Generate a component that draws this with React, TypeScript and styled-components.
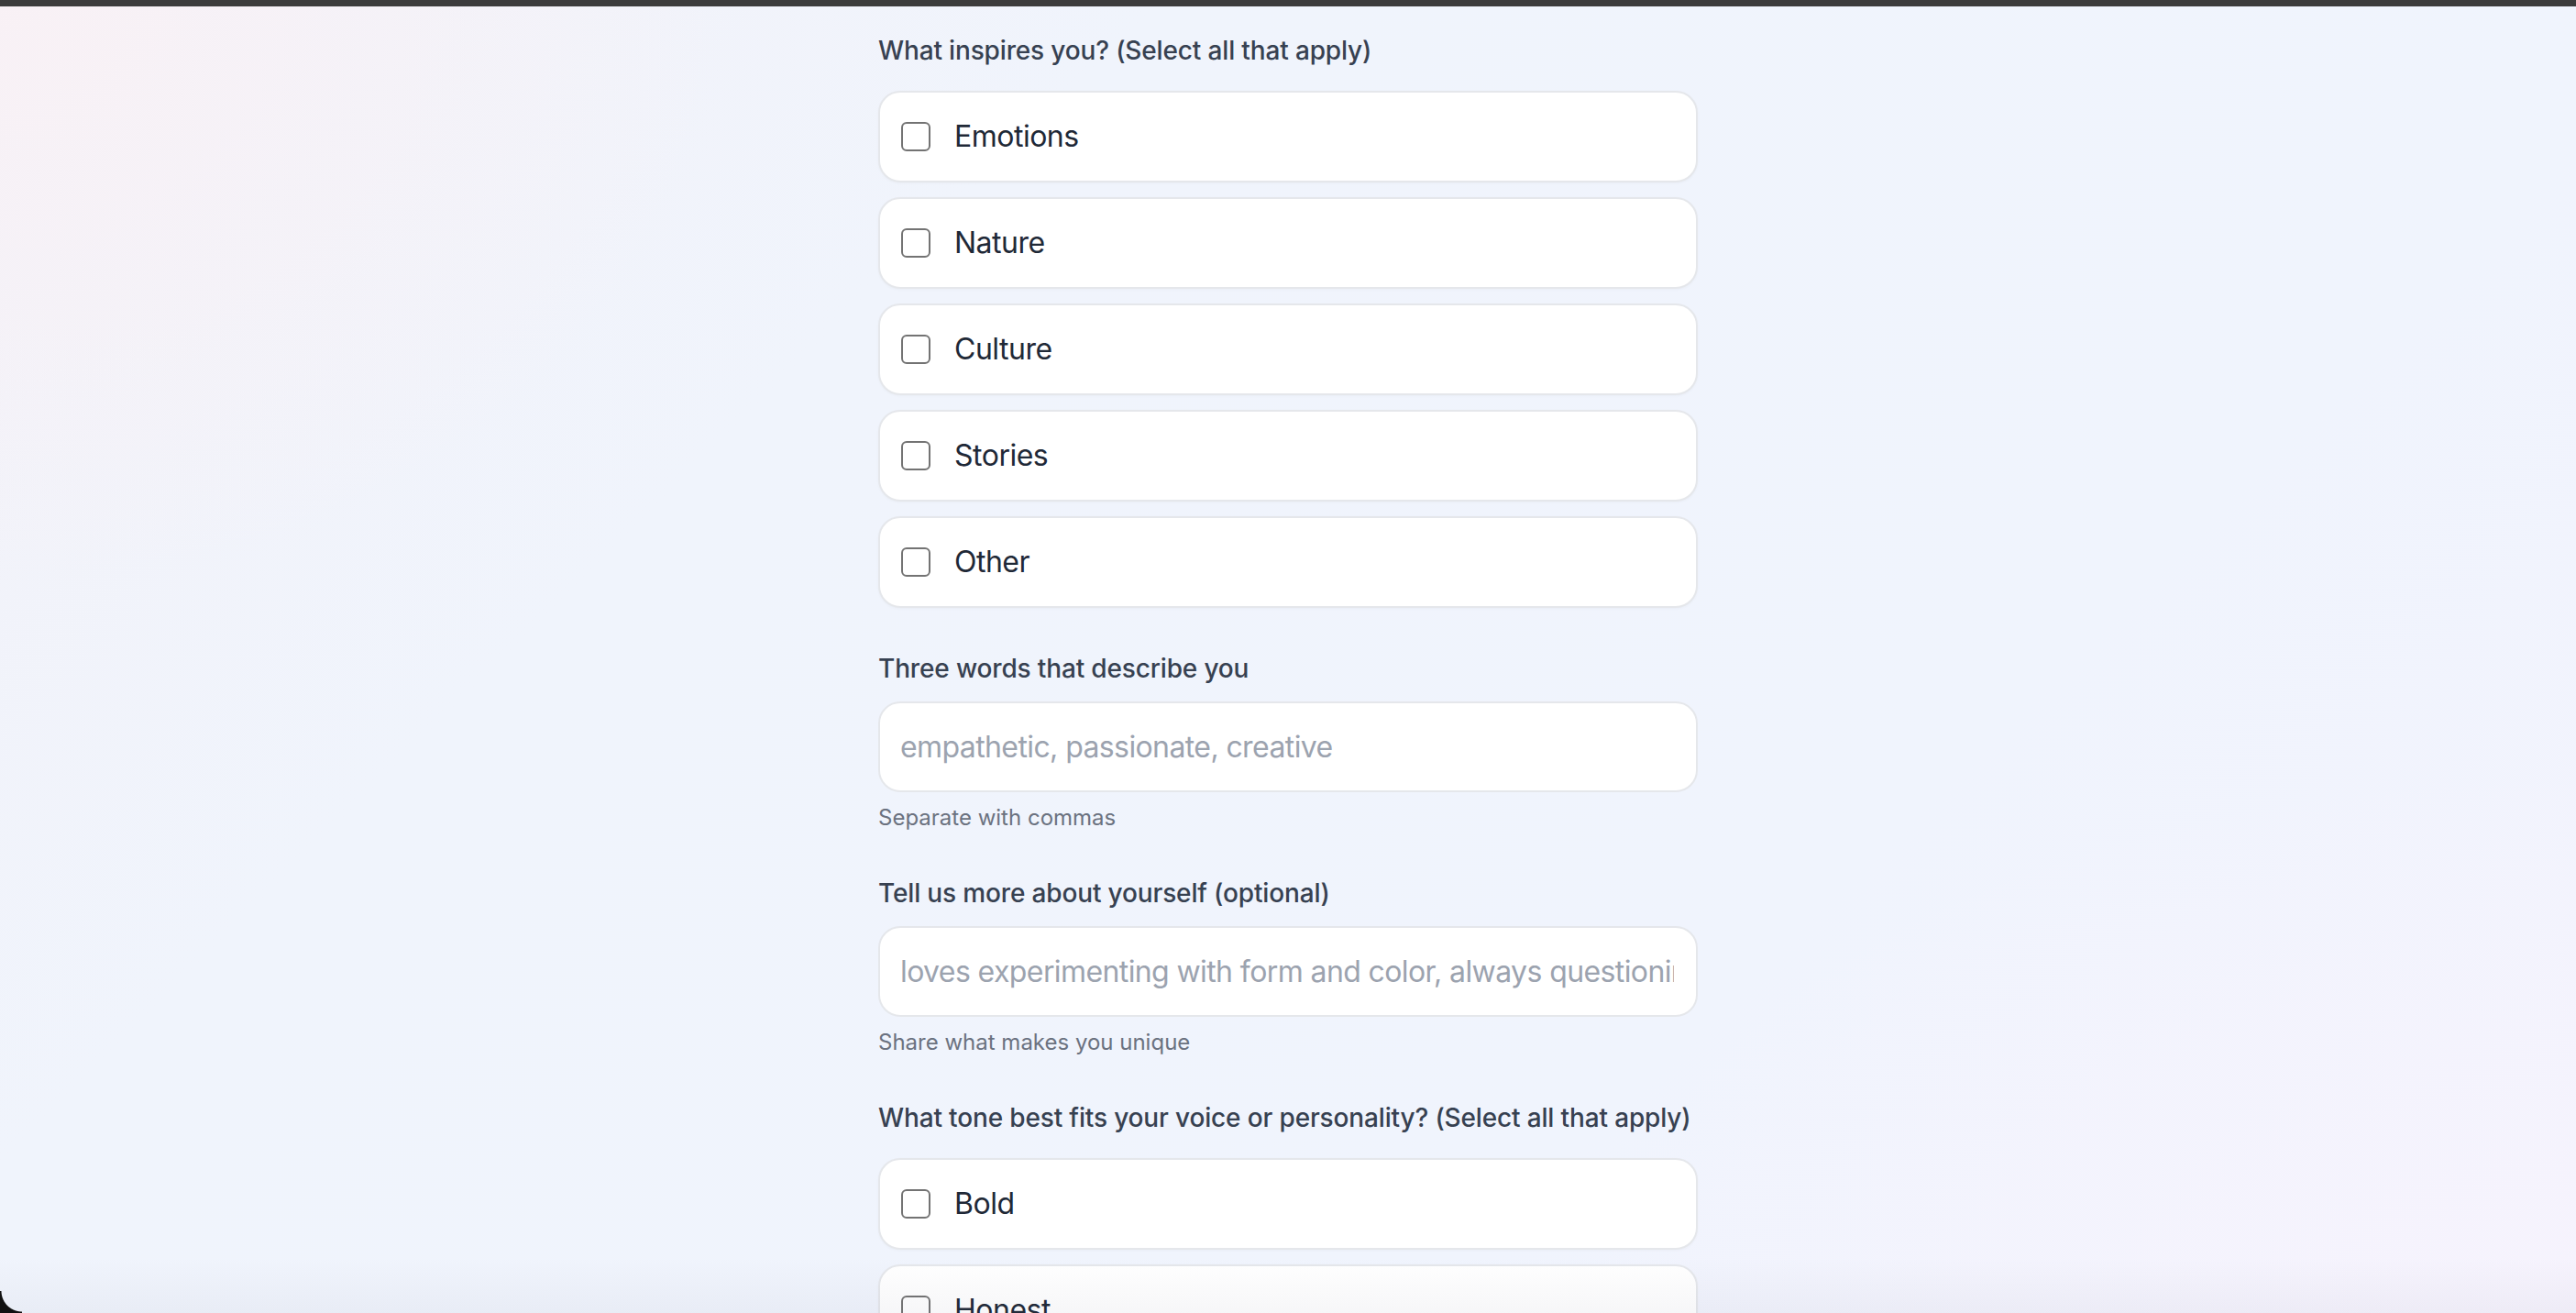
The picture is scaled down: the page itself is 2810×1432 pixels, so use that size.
import React from "react";
import styled, { createGlobalStyle } from "styled-components";

const GlobalStyle = createGlobalStyle`
  html, body {
    margin: 0;
    padding: 0;
    height: 100%;
    overflow: hidden;
  }
  body {
    font-family: Inter, "Noto Sans", "Liberation Sans", sans-serif;
    -webkit-font-smoothing: antialiased;
  }
  * { box-sizing: border-box; }
`;

const Page = styled.div`
  position: relative;
  width: 2810px;
  height: 1432px;
  overflow: hidden;
  background:
    radial-gradient(ellipse 800px 650px at 0% 0%, rgba(249, 241, 245, 0.9) 0%, rgba(249, 241, 245, 0) 100%),
    radial-gradient(ellipse 1100px 600px at 100% 100%, rgba(246, 243, 253, 1) 0%, rgba(246, 243, 253, 0) 100%),
    linear-gradient(135deg, #f3f2f8 0%, #f0f4fc 30%, #f0f4fd 70%, #f3f3fd 100%);
`;

const TopBar = styled.div`
  height: 7px;
  background: #3c3c3c;
`;

const Form = styled.form`
  width: 894px;
  margin: 0 auto;
  padding-top: 28px;
  display: flex;
  flex-direction: column;
  gap: 46px;
`;

const Section = styled.section`
  display: flex;
  flex-direction: column;
`;

const Label = styled.div<{ $gap: number }>`
  font-size: 28px;
  line-height: 40px;
  font-weight: 500;
  color: #374151;
  letter-spacing: -0.15px;
  white-space: nowrap;
  margin-bottom: ${(p) => p.$gap}px;
`;

const OptionList = styled.div`
  display: flex;
  flex-direction: column;
  gap: 16px;
`;

const OptionCard = styled.label`
  display: flex;
  align-items: center;
  height: 100px;
  padding: 0 24px 0 23px;
  background: #ffffff;
  border: 2px solid #e5e7eb;
  border-radius: 24px;
  box-shadow: 0 1px 3px rgba(17, 24, 39, 0.03);
  cursor: pointer;
`;

const Box = styled.input`
  appearance: none;
  -webkit-appearance: none;
  width: 32px;
  height: 32px;
  margin: 0 26px 0 0;
  border: 2px solid #737373;
  border-radius: 6px;
  background: #ffffff;
  flex-shrink: 0;
`;

const OptionText = styled.span`
  font-size: 32px;
  line-height: 48px;
  color: #1f2937;
  letter-spacing: -0.5px;
`;

const TextInput = styled.input`
  width: 100%;
  height: 99px;
  padding: 0 24px 0 22px;
  background: #ffffff;
  border: 2px solid #e5e7eb;
  border-radius: 24px;
  font-family: Inter, "Noto Sans", "Liberation Sans", sans-serif;
  font-size: 32px;
  color: #1f2937;
  letter-spacing: -0.6px;
  outline: none;
  &::placeholder {
    color: #9ca3af;
  }
`;

const Helper = styled.div`
  margin-top: 12px;
  font-size: 24px;
  line-height: 32px;
  color: #6b7280;
`;

const BottomFade = styled.div`
  position: absolute;
  left: 0;
  right: 0;
  bottom: 0;
  height: 60px;
  pointer-events: none;
  background: linear-gradient(to bottom, rgba(90, 90, 120, 0) 0%, rgba(90, 90, 120, 0.05) 100%);
`;

const Corner = styled.div`
  position: absolute;
  left: 0;
  bottom: 0;
  width: 24px;
  height: 24px;
  pointer-events: none;
  background: radial-gradient(circle at 24px 0px, transparent 22px, #111 23px);
`;

const inspirations = ["Emotions", "Nature", "Culture", "Stories", "Other"];
const tones = ["Bold", "Honest", "Playful", "Thoughtful", "Calm"];

function Option({ text }: { text: string }) {
  return (
    <OptionCard>
      <Box type="checkbox" />
      <OptionText>{text}</OptionText>
    </OptionCard>
  );
}

export default function App() {
  return (
    <Page>
      <GlobalStyle />
      <TopBar />
      <Form onSubmit={(e) => e.preventDefault()}>
        <Section>
          <Label $gap={24}>What inspires you? (Select all that apply)</Label>
          <OptionList>
            {inspirations.map((t) => (
              <Option key={t} text={t} />
            ))}
          </OptionList>
        </Section>
        <Section>
          <Label $gap={16}>Three words that describe you</Label>
          <TextInput placeholder="empathetic, passionate, creative" />
          <Helper>Separate with commas</Helper>
        </Section>
        <Section>
          <Label $gap={16}>Tell us more about yourself (optional)</Label>
          <TextInput placeholder="loves experimenting with form and color, always questioning the ordinary" />
          <Helper>Share what makes you unique</Helper>
        </Section>
        <Section>
          <Label $gap={24}>What tone best fits your voice or personality? (Select all that apply)</Label>
          <OptionList>
            {tones.map((t) => (
              <Option key={t} text={t} />
            ))}
          </OptionList>
        </Section>
      </Form>
      <BottomFade />
      <Corner />
    </Page>
  );
}
